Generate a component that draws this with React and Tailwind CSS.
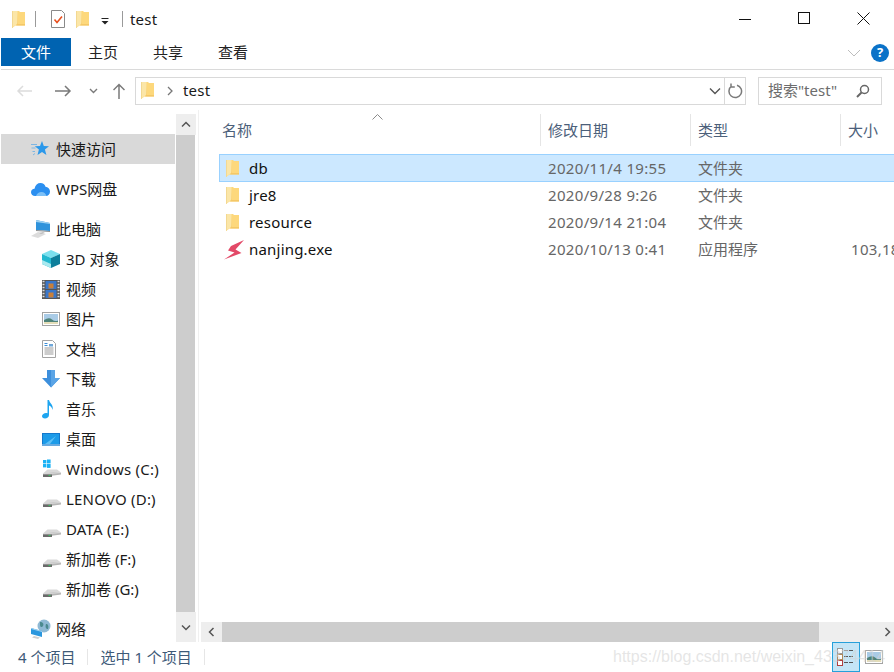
import React from "react";

const Folder = ({ className = "" }) => (
  <svg width="13" height="17" viewBox="0 0 13 17" className={className}>
    <path d="M0 0h7l1 1h5v13.500H3.500L0 17z" fill="#fdd87c" />
    <path d="M0 0h5.500v12.500L0 17z" fill="#fbe6a8" />
    <path d="M5.500 1v11.500L4 14.500h9V13H6z" fill="#f4c868" />
    <path d="M0 0v17l.8-.6V0z" fill="#f1d58c" />
  </svg>
);

const Drive = ({ win }) => (
  <svg width="20" height="20" viewBox="0 0 20 20">
    {win && (
      <g fill="#1bb2f5">
        <rect x="1" y="1" width="3.4" height="3.4" />
        <rect x="5" y="0.5" width="3.6" height="3.9" />
        <rect x="1" y="5" width="3.4" height="3.4" />
        <rect x="5" y="5" width="3.6" height="3.9" />
      </g>
    )}
    <path d="M1 14.500 L5.500 10.500 H15 L19 13.500 V15 L8 16z" fill="#d9d9d9" />
    <path d="M1 14.500 L12 13.500 L19 13.500 V15.500 L1 18z" fill="#b5b5b5" />
    <path d="M1 14.500 L19 13.500 V14 L1 15z" fill="#f0f0f0" />
    <path d="M1 15.500 H10 V18 H1z" fill="#6a6a6a" />
    <rect x="6.500" y="16" width="2" height="1" fill="#39c45e" />
  </svg>
);

const Star = () => (
  <svg width="18" height="18" viewBox="0 0 18 18">
    <path d="M0 4.500h6M.5 8h4M1.500 11.500h2.500M2 15l2-1.500" stroke="#7db6e3" strokeWidth="1" />
    <path d="M11 1l1.800 5 5.200.3-4.100 3.300 1.500 5.400-4.400-3-4.500 3 1.400-5.400L3.800 6.300 9 6z" fill="#2b98ea" />
  </svg>
);
const Cloud = () => (
  <svg width="19" height="15" viewBox="0 0 19 15">
    <path d="M4 14C1.800 14 0 12.500 0 10.300S1.500 6.800 3.500 6.800C4.300 3 6.500 1 9.500 1c2.500 0 4.500 1.500 5 3.700 2.500.1 4.500 2 4.500 4.800S17 14 15 14z" fill="#2b8ff0" />
    <path d="M5 14c1-2.800 3-4 5.500-4 2.500 0 4 1.400 5 4z" fill="#7cc0f7" />
  </svg>
);
const Pc = () => (
  <svg width="20" height="20" viewBox="0 0 20 20">
    <path d="M5 1 L19 4 V12 L5 11z" fill="#2f93dc" />
    <path d="M5 1 L19 4 V5 L5 3z" fill="#9fd2f2" />
    <path d="M5 11 L19 12 L19 13 L5 12z" fill="#8d8d8d" />
    <path d="M0 17 L7 13 L15 15 L7 19z" fill="#dcdcdc" />
    <path d="M8 14 L12 13 L14 14 L10 15z" fill="#bdbdbd" />
  </svg>
);
const Cube = () => (
  <svg width="18" height="18" viewBox="0 0 18 18">
    <path d="M9 0 L18 4 L9 8 L0 4z" fill="#7be0ee" />
    <path d="M0 4 L9 8 V18 L0 14z" fill="#22b8cf" />
    <path d="M18 4 L9 8 V18 L18 14z" fill="#0d7f9b" />
    <path d="M0 10 L9 14 V18 L0 14z" fill="#a8e9ef" />
  </svg>
);
const Film = () => (
  <svg width="18" height="19" viewBox="0 0 18 19">
    <rect width="18" height="19" fill="#555" />
    <path d="M.5 1.500h2M.5 4.500h2M.5 7.500h2M.5 10.500h2M.5 13.500h2M.5 16.500h2M15.500 1.500h2M15.500 4.500h2M15.500 7.500h2M15.500 10.500h2M15.500 13.500h2M15.500 16.500h2" stroke="#ddd" strokeWidth="1.400" />
    <rect x="3.500" y="1" width="11" height="8" fill="#3a77c9" />
    <rect x="3.500" y="10" width="11" height="8" fill="#3a77c9" />
    <rect x="6.500" y="3.500" width="5" height="5" fill="#c9803a" />
    <rect x="6.500" y="12.500" width="5" height="5" fill="#c9803a" />
  </svg>
);
const Pic = () => (
  <svg width="18" height="14" viewBox="0 0 18 14">
    <rect x=".5" y=".5" width="17" height="13" fill="#fff" stroke="#a3a3a3" />
    <rect x="2" y="2" width="14" height="10" fill="#a9cbe6" />
    <path d="M2 8 Q7 5 10 7.500 T16 8.500 V12 H2z" fill="#4f8379" />
    <path d="M2 10 H16 V12 H2z" fill="#e4ddb8" />
  </svg>
);
const Doc = () => (
  <svg width="14" height="18" viewBox="0 0 14 18">
    <path d="M.5.500h10l3 3v14H.5z" fill="#fff" stroke="#a3a3a3" />
    <path d="M2.500 3.500h3M2.500 5.500h3" stroke="#3a8ed8" />
    <path d="M2.500 8h9M2.500 10h9M2.500 12h9M2.500 14h9" stroke="#9a9a9a" />
    <rect x="7" y="4" width="4" height="2.500" fill="#6fa7d8" />
  </svg>
);
const Down = () => (
  <svg width="18" height="18" viewBox="0 0 18 18">
    <path d="M5 0h8v8h5l-9 9.500L0 8h5z" fill="#3d8fdc" />
    <path d="M9 0h4v8h5l-9 9.500z" fill="#5aa4e6" />
  </svg>
);
const Note = () => (
  <svg width="14" height="19" viewBox="0 0 14 19">
    <path d="M5.500 0h1.500c.5 3 5 5 3.500 10-.3-2.500-2-4-3.500-4.500V15c0 2-2 3.500-4 3.500S0 17.500 0 16s2-3 4-3c.6 0 1.100.1 1.500.3z" fill="#1ea5f0" />
  </svg>
);
const Desk = () => (
  <svg width="18" height="13" viewBox="0 0 18 13">
    <rect width="18" height="13" fill="#1478cc" />
    <rect x="1" y="1" width="16" height="10" fill="#1d9be8" />
    <path d="M3 11 L14 3 L8 11z" fill="#5ec0f5" />
    <rect x="0" y="11.500" width="18" height="1" fill="#b9dcf3" />
  </svg>
);
const Net = () => (
  <svg width="20" height="20" viewBox="0 0 20 20">
    <circle cx="13" cy="7" r="6.500" fill="#8fb9d4" />
    <path d="M9 3c3 0 4 2 3 4s-3 1-3-1M15 5c2 0 3 2 2 5-2 0-3-2-2-5z" fill="#4b8a8f" />
    <path d="M0 9 L11 12 V18 L0 15z" fill="#2b97de" />
    <path d="M0 9 L11 12 V13 L0 10z" fill="#a2d4f3" />
    <path d="M3 17 L9 18.500 L7 20 L1 18.500z" fill="#cfcfcf" />
  </svg>
);
const Bolt = () => (
  <svg width="20" height="20" viewBox="0 0 20 20">
    <path d="M20 0 L7 6 L4 10.500 L10.500 12.500 L0 19.500 L17.500 13 L11.500 9.500z" fill="#e34a68" />
  </svg>
);

const SideRow = ({ icon, label, level, active, gap, latin }) => (
  <div className={`flex h-[30px] items-center text-[15px] text-[#1a1a1a] ${latin ? "tracking-[0.2px]" : ""} ${active ? "bg-[#d9d9d9]" : ""} ${gap ? "mt-[10px]" : ""} ${level ? "pl-[41px]" : "pl-[30px]"}`}>
    <span className={`flex shrink-0 items-center justify-start ${level ? "w-[24px]" : "w-[25px]"}`}>{icon}</span>
    <span className="whitespace-nowrap">{label}</span>
  </div>
);

const FileRow = ({ icon, name, date, type, size, selected, bolt }) => (
  <div className={`flex h-[27px] items-center ${selected ? "h-[28px] border-y border-l border-[#99d1ff] bg-[#cce8ff]" : "border-l border-transparent"}`}>
    <span className={`flex w-[29px] shrink-0 justify-start ${bolt ? "pl-[4px]" : "pl-[6px]"}`}>{icon}</span>
    <span className="w-[299px] shrink-0 text-[15px] tracking-[0.2px] text-[#111]">{name}</span>
    <span className="w-[150px] shrink-0 whitespace-nowrap text-[15px] tracking-[0.33px] text-[#666]">{date}</span>
    <span className="w-[153px] shrink-0 whitespace-nowrap text-[15px] text-[#666]">{type}</span>
    <span className="whitespace-nowrap text-[15px] tracking-[0.3px] text-[#666]">{size}</span>
  </div>
);

const HeaderCell = ({ label, w, first }) => (
  <div className={`flex h-[32px] shrink-0 items-center text-[15px] text-[#4c607a] ${w} ${first ? "pl-[3px]" : "border-l border-[#e5e5e5] pl-[7px]"}`}>{label}</div>
);

export default function App() {
  return (
    <div className="flex h-[672px] w-[894px] flex-col overflow-hidden bg-white font-['Noto_Sans','Noto_Sans_CJK_SC',sans-serif]">
      {/* title bar */}
      <div className="flex h-[38px] shrink-0 items-center">
        <div className="flex items-center pl-[12px]">
          <Folder />
          <div className="ml-[10px] h-[16px] w-px bg-[#9a9a9a]" />
          <svg width="16" height="18" viewBox="0 0 16 18" className="ml-[14px]">
            <path d="M1.500.500h10l3 3v14h-13z" fill="#fff" stroke="#8a8a8a" />
            <path d="M4.500 9.500l2.500 3 5-6" fill="none" stroke="#e8501f" strokeWidth="1.600" />
          </svg>
          <Folder className="ml-[10px]" />
          <svg width="10" height="7" viewBox="0 0 10 7" className="ml-[11px] mt-[4px]">
            <rect x="1.500" y="0" width="7" height="1" fill="#222" />
            <path d="M1.500 3h7L5 6.500z" fill="#222" />
          </svg>
          <div className="ml-[12px] h-[16px] w-px bg-[#9a9a9a]" />
          <span className="ml-[7px] text-[15px] tracking-[0.2px] text-[#1a1a1a]">test</span>
        </div>
        <div className="ml-auto flex items-center">
          <svg width="14" height="14" viewBox="0 0 14 14" className="mr-[45px]"><path d="M0 7.500h12" stroke="#111" /></svg>
          <svg width="14" height="14" viewBox="0 0 14 14" className="mr-[45px]"><rect x=".5" y=".5" width="11" height="11" fill="none" stroke="#111" /></svg>
          <svg width="14" height="14" viewBox="0 0 14 14" className="mr-[23px]"><path d="M.5.500l12 12M12.500.500l-12 12" stroke="#111" /></svg>
        </div>
      </div>

      {/* ribbon tabs */}
      <div className="ml-px flex h-[32px] shrink-0 border-b border-[#dadada] pb-[3px]">
        <div className="flex h-[28px] w-[70px] items-center justify-center bg-[#0063b1] text-[15px] text-white">文件</div>
        <div className="ml-[17px] flex h-[28px] items-center gap-[35px] text-[15px] text-[#222]">
          <span>主页</span>
          <span>共享</span>
          <span>查看</span>
        </div>
        <div className="ml-auto flex h-[28px] items-center">
          <svg width="14" height="8" viewBox="0 0 14 8" className="mr-[10px] mt-[2px]"><path d="M1 1l6 6 6-6" fill="none" stroke="#bdbdbd" /></svg>
          <div className="mr-[5px] mt-[2px] flex h-[18px] w-[18px] items-center justify-center rounded-full bg-[#0a72c8] text-[13px] font-bold text-white">?</div>
        </div>
      </div>

      {/* nav bar */}
      <div className="flex h-[40px] shrink-0 items-center pt-[1px]">
        <svg width="17" height="12" viewBox="0 0 17 12" className="ml-[16px]"><path d="M16 6H2M7 1L2 6l5 5" fill="none" stroke="#dcdcdc" strokeWidth="1.500" /></svg>
        <svg width="17" height="12" viewBox="0 0 17 12" className="ml-[22px]"><path d="M0 6h15M10 1l5 5-5 5" fill="none" stroke="#7a7a7a" strokeWidth="1.500" /></svg>
        <svg width="9" height="6" viewBox="0 0 9 6" className="ml-[17px]"><path d="M1 1l3.500 3.500L8 1" fill="none" stroke="#7a7a7a" strokeWidth="1.400" /></svg>
        <svg width="12" height="16" viewBox="0 0 12 16" className="ml-[15px]"><path d="M6 16V1.500M.5 7L6 1.500 11.500 7" fill="none" stroke="#7a7a7a" strokeWidth="1.500" /></svg>
        <div className="ml-[10px] flex h-[28px] w-[611px] items-center border border-[#d9d9d9] pl-[5px]">
          <Folder />
          <svg width="7" height="10" viewBox="0 0 7 10" className="ml-[13px]"><path d="M1 1l4 4-4 4" fill="none" stroke="#777" strokeWidth="1.300" /></svg>
          <span className="ml-[9px] text-[15px] tracking-[0.2px] text-[#1a1a1a]">test</span>
          <div className="ml-auto flex h-full items-center">
            <svg width="12" height="8" viewBox="0 0 12 8" className="mr-[3px]"><path d="M1 1.500l5 5 5-5" fill="none" stroke="#555" strokeWidth="1.400" /></svg>
            <div className="flex h-full w-[21px] items-center justify-center border-l border-[#d9d9d9]">
              <svg width="15" height="16" viewBox="0 0 15 16"><path d="M3.500 3.200A6.300 6.300 0 1 0 9 2.200M3 .5v3.500h3.800" fill="none" stroke="#7a7a7a" strokeWidth="1.500" /></svg>
            </div>
          </div>
        </div>
        <div className="ml-[12px] flex h-[28px] w-[124px] items-center justify-between border border-[#d9d9d9] pl-[9px] pr-[11px]">
          <span className="whitespace-nowrap text-[15px] text-[#6d6d6d]">搜索"test"</span>
          <svg width="14" height="14" viewBox="0 0 14 14"><circle cx="8.500" cy="5.500" r="4" fill="none" stroke="#666" strokeWidth="1.500" /><path d="M5.500 8.500L1 13" stroke="#666" strokeWidth="2" /></svg>
        </div>
      </div>

      {/* main */}
      <div className="flex h-[532px] shrink-0">
        <div className="ml-px w-[174px] shrink-0 pt-[24px]">
          <SideRow active icon={<Star />} label="快速访问" />
          <SideRow gap icon={<Cloud />} label="WPS网盘" />
          <SideRow gap icon={<Pc />} label="此电脑" />
          <SideRow level icon={<Cube />} label="3D 对象" />
          <SideRow level icon={<Film />} label="视频" />
          <SideRow level icon={<Pic />} label="图片" />
          <SideRow level icon={<Doc />} label="文档" />
          <SideRow level icon={<Down />} label="下载" />
          <SideRow level icon={<Note />} label="音乐" />
          <SideRow level icon={<Desk />} label="桌面" />
          <SideRow level latin icon={<Drive win />} label="Windows (C:)" />
          <SideRow level latin icon={<Drive />} label="LENOVO (D:)" />
          <SideRow level latin icon={<Drive />} label="DATA (E:)" />
          <SideRow level icon={<Drive />} label="新加卷 (F:)" />
          <SideRow level icon={<Drive />} label="新加卷 (G:)" />
          <SideRow gap icon={<Net />} label="网络" />
        </div>

        {/* sidebar scrollbar */}
        <div className="ml-px mt-[4px] flex h-[528px] w-[20px] shrink-0 flex-col">
          <div className="flex h-[21px] items-center justify-center bg-[#eeeeee]">
            <svg width="10" height="7" viewBox="0 0 10 7"><path d="M1 5.500l4-4 4 4" fill="none" stroke="#555" strokeWidth="1.500" /></svg>
          </div>
          <div className="mr-px flex-1 bg-[#cdcdcd]" />
          <div className="flex h-[30px] items-center justify-center bg-[#eeeeee]">
            <svg width="10" height="7" viewBox="0 0 10 7"><path d="M1 1.500l4 4 4-4" fill="none" stroke="#555" strokeWidth="1.500" /></svg>
          </div>
        </div>
        <div className="ml-[2px] h-full w-px shrink-0 bg-[#f0f0f0]" />

        {/* file pane */}
        <div className="relative flex min-w-0 flex-1 flex-col overflow-hidden">
          <div className="flex-1 pl-[20px] pt-[4px]">
            <div className="relative flex">
              <HeaderCell first label="名称" w="w-[321px]" />
              <HeaderCell label="修改日期" w="w-[150px]" />
              <HeaderCell label="类型" w="w-[150px]" />
              <HeaderCell label="大小" w="w-[60px]" />
              <svg width="11" height="6" viewBox="0 0 11 6" className="absolute left-[153px] top-[0px]"><path d="M.5 5.500l5-5 5 5" fill="none" stroke="#8a8a8a" /></svg>
            </div>
            <div className="mt-[8px]">
              <FileRow selected icon={<Folder />} name="db" date="2020/11/4 19:55" type="文件夹" />
              <FileRow icon={<Folder />} name="jre8" date="2020/9/28 9:26" type="文件夹" />
              <FileRow icon={<Folder />} name="resource" date="2020/9/14 21:04" type="文件夹" />
              <FileRow bolt icon={<Bolt />} name="nanjing.exe" date="2020/10/13 0:41" type="应用程序" size="103,18" />
            </div>
          </div>
          {/* horizontal scrollbar */}
          <div className="ml-[2px] flex h-[20px] shrink-0">
            <div className="flex w-[21px] items-center justify-center bg-[#eeeeee]">
              <svg width="7" height="10" viewBox="0 0 7 10"><path d="M5.500 1l-4 4 4 4" fill="none" stroke="#555" strokeWidth="1.500" /></svg>
            </div>
            <div className="w-[597px] bg-[#cdcdcd]" />
            <div className="flex flex-1 items-center justify-end bg-[#eeeeee] pr-[3px]">
              <svg width="7" height="10" viewBox="0 0 7 10"><path d="M1.500 1l4 4-4 4" fill="none" stroke="#555" strokeWidth="1.500" /></svg>
            </div>
          </div>
        </div>
      </div>

      {/* status bar */}
      <div className="relative flex flex-1 items-center text-[15px] text-[#3d5a78]">
        <span className="ml-[18px] whitespace-nowrap">4 个项目</span>
        <div className="ml-[12px] h-[16px] w-px bg-[#e6e6e6]" />
        <span className="ml-[12px] whitespace-nowrap">选中 1 个项目</span>
        <div className="ml-[12px] h-[16px] w-px bg-[#e6e6e6]" />
        <div className="ml-auto mr-[11px] flex items-center gap-[5px]">
          <div className="flex h-[30px] w-[28px] items-center justify-center border border-[#26a0da] bg-[#c4e5f6]">
            <svg width="18" height="18" viewBox="0 0 18 18">
              <rect x=".5" y=".5" width="5" height="5" fill="#fff" stroke="#999" />
              <rect x=".5" y="6.500" width="5" height="5" fill="#fff" stroke="#b08a5a" />
              <rect x=".5" y="12.500" width="5" height="5" fill="#fff" stroke="#b04040" />
              <path d="M7 2.500h10M7 8.500h10M7 14.500h10" stroke="#555" strokeDasharray="4 1" />
            </svg>
          </div>
          <Pic />
        </div>
        <span className="pointer-events-none absolute left-[613px] top-[3px] whitespace-nowrap font-['Liberation_Sans',sans-serif] text-[16px] text-[#d4d4d4]/60">https://blog.csdn.net/weixin_43374414</span>
      </div>
    </div>
  );
}
